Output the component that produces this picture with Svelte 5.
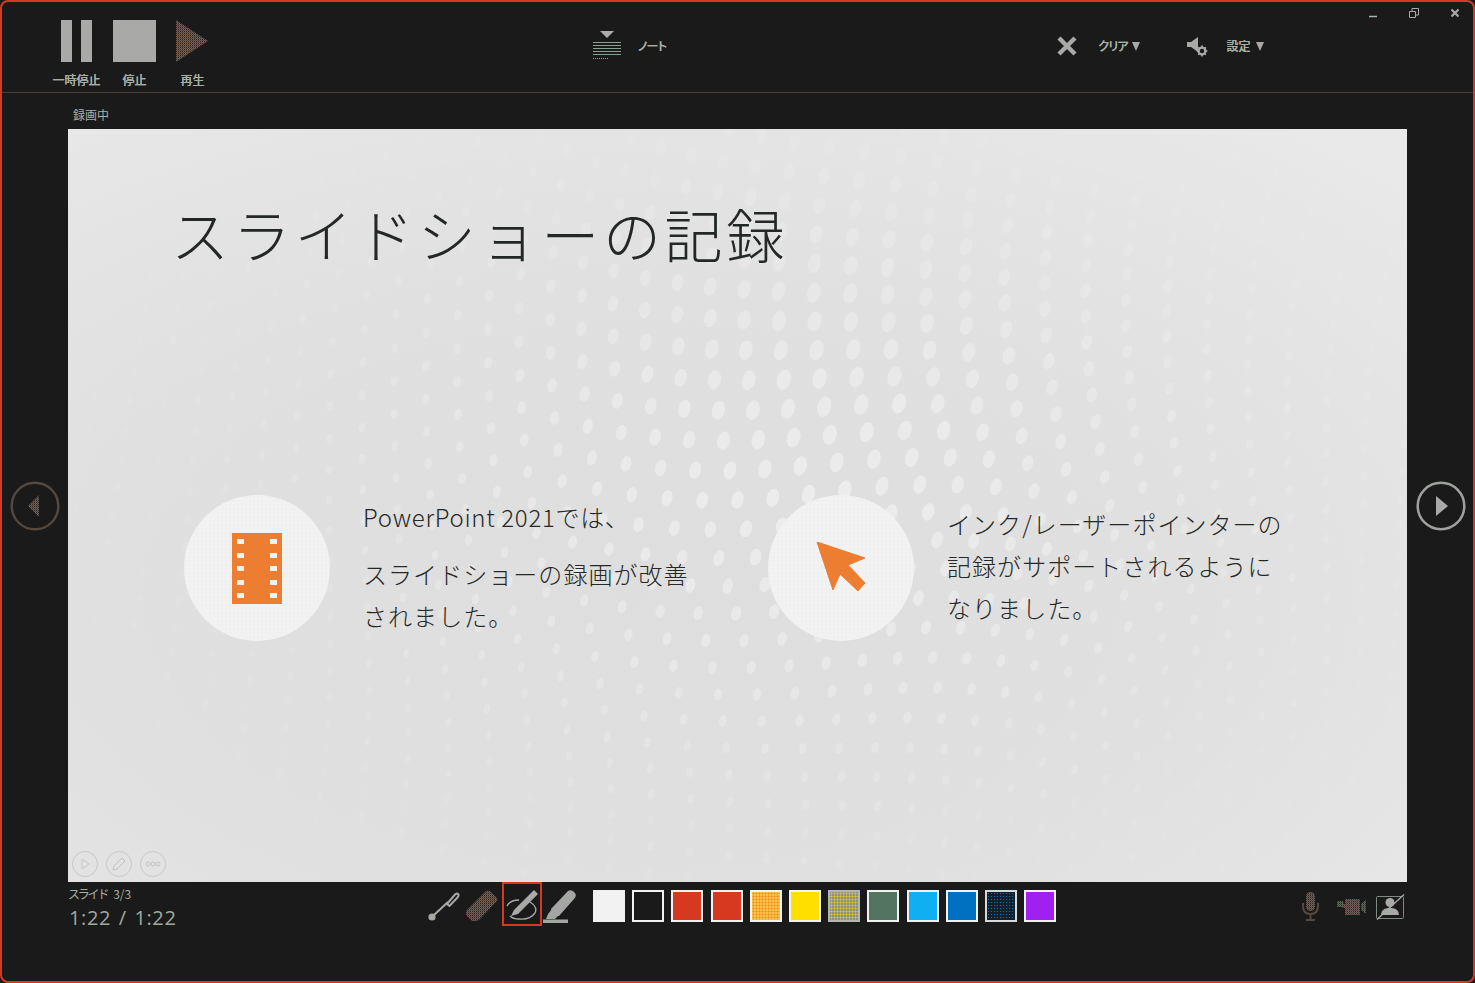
<script lang="ts">
  // Swatches of the ink palette, in toolbar order.
  const swatches = ['white', 'black', 'red', 'red', 'orange', 'yellow', 'olive', 'green', 'sky', 'blue', 'navy', 'purple'];

  // Warped dot lattice behind the slide content (coordinates are slide-local).
  function buildDots() {
    const out: { x: number; y: number; rx: number; ry: number; o: number; t: number }[] = [];
    const cx = 760;
    const cy = 420;
    for (let i = -34; i <= 34; i++) {
      for (let j = -30; j <= 30; j++) {
        const bx = i * 36 + j * 11;
        const by = i * -6 + j * 27;
        const d0 = Math.hypot(bx, by);
        const swirl = 0.00075 * d0;
        const x = cx + bx * Math.cos(swirl) - by * Math.sin(swirl);
        const y = cy + bx * Math.sin(swirl) + by * Math.cos(swirl);
        if (x < 0 || x > 1339 || y < 0 || y > 753) continue;
        const ex = (x - 740) / 500;
        const ey = (y - 370) / 300;
        const env = Math.exp(-(ex * ex + ey * ey));
        if (env < 0.1) continue;
        const size = 0.4 + 0.6 * Math.exp(-Math.pow(Math.hypot(x - 770, y - 240) / 320, 2));
        out.push({ x, y, rx: 7 * size, ry: 10.500 * size, o: 0.68 * env, t: 8 + x * 0.01 });
      }
    }
    return out;
  }
  const dots = buildDots();
</script>

<svg class="defs" width="0" height="0" aria-hidden="true">
  <defs>
    <pattern id="dim" width="2" height="2" patternUnits="userSpaceOnUse">
      <rect width="2" height="2" fill="#2a2826" />
      <rect width="1" height="1" fill="#6d5a50" />
      <rect x="1" y="1" width="1" height="1" fill="#547463" />
      <rect x="1" width="1" height="1" fill="#54473f" />
    </pattern>
  </defs>
</svg>

<div class="window">
  <header class="ribbon">
    <div class="transport">
      <div class="tool">
        <svg width="32" height="42" viewBox="0 0 32 42"><rect x="0" width="11" height="42" fill="#a9aaa7" /><rect x="20" width="11" height="42" fill="#a9aaa7" /></svg>
        <span>一時停止</span>
      </div>
      <div class="tool">
        <svg width="44" height="42" viewBox="0 0 44 42"><rect width="43" height="42" fill="#a9aaa7" /></svg>
        <span>停止</span>
      </div>
      <div class="tool">
        <svg width="34" height="42" viewBox="0 0 34 42"><path d="M0 0 32 21 0 42Z" fill="url(#dim)" /></svg>
        <span>再生</span>
      </div>
    </div>

    <div class="inline">
      <svg width="28" height="30" viewBox="0 0 28 30" class="notes-icon">
        <path d="M7 0H21L14 7Z" fill="#a9aea8" />
        <g stroke="#8d9f92" stroke-width="1">
          <path d="M0 11.500H28M0 14.500H28M0 17.500H28M0 20.500H28M0 23.500H28" />
          <path d="M0 27.500H16" stroke-dasharray="1 1" />
        </g>
      </svg>
      <span class="txt notes-label">ノート</span>
    </div>

    <div class="inline">
      <svg width="20" height="20" viewBox="0 0 20 20" class="clear-icon"><path d="M2 2 18 18M18 2 2 18" stroke="#a9aaa7" stroke-width="4.400" /></svg>
      <span class="txt clear-label">クリア</span>
      <i class="caret"></i>
      <svg width="21" height="20" viewBox="0 0 21 20" class="sound-icon">
        <path d="M0 5H4L11 0V15L4 10H0Z" fill="#a9aaa7" />
        <circle cx="15" cy="14" r="3.400" fill="none" stroke="#a9aaa7" stroke-width="2.400" />
        <path d="M15 8.600V10M15 18V19.400M9.600 14H11M19 14H20.400M11.200 10.200 12.200 11.200M17.800 16.800 18.800 17.800M18.800 10.200 17.800 11.200M12.200 16.800 11.200 17.800" stroke="#a9aaa7" stroke-width="1.600" />
      </svg>
      <span class="txt settings-label">設定</span>
      <i class="caret"></i>
    </div>

    <div class="win-controls">
      <svg width="10" height="10" viewBox="0 0 10 10"><path d="M1 8.500H9" stroke="#a5b5a8" stroke-width="1.600" /></svg>
      <svg width="10" height="10" viewBox="0 0 10 10"><path d="M.5 3.500H6.500V9.500H.5ZM3 3.500V.5H9.500V7H6.500" fill="none" stroke="#a9aaa7" /></svg>
      <svg width="10" height="10" viewBox="0 0 10 10"><path d="M1.500 1.500 8.500 8.500M8.500 1.500 1.500 8.500" stroke="#a9aaa7" stroke-width="2.200" /></svg>
    </div>
  </header>

  <div class="stage">
    <div class="rec-label">録画中</div>

    <div class="side">
      <svg width="50" height="50" viewBox="0 0 50 50">
        <circle cx="25" cy="25" r="23.300" fill="none" stroke="#54483f" stroke-width="2.400" />
        <path d="M18 25 29 14V36Z" fill="url(#dim)" />
      </svg>
    </div>

    <main class="slide">
      <svg class="dots" width="1339" height="753" viewBox="0 0 1339 753" aria-hidden="true">
        {#each dots as d}
          <ellipse cx={d.x} cy={d.y} rx={d.rx} ry={d.ry} fill="#f1f1f1" opacity={d.o} transform="rotate({d.t} {d.x} {d.y})" />
        {/each}
      </svg>

      <h1>スライドショーの記録</h1>

      <div class="features">
        <section class="feature">
          <div class="disc">
            <svg width="50" height="71" viewBox="0 0 50 71">
              <rect width="50" height="71" fill="#ed7d31" />
              {#each [8, 22, 35, 49, 62] as y}
                <rect x="5" y={y - 2} width="7" height="5" fill="#f2f2f2" />
                <rect x="38" y={y - 2} width="7" height="5" fill="#f2f2f2" />
              {/each}
            </svg>
          </div>
          <div class="copy left">
            <p class="first">PowerPoint 2021では、</p>
            <p>スライドショーの録画が改善</p>
            <p>されました。</p>
          </div>
        </section>

        <section class="feature">
          <div class="disc">
            <svg width="50" height="50" viewBox="0 0 50 50" class="cursor">
              <path d="M1 0 49 16 32 23 49 41 42 49 24 32 17 48Z" fill="#ed7d31" stroke="#ed7d31" stroke-linejoin="round" />
            </svg>
          </div>
          <div class="copy">
            <p>インク/レーザーポインターの</p>
            <p>記録がサポートされるように</p>
            <p>なりました。</p>
          </div>
        </section>
      </div>

      <div class="slide-controls">
        <span class="mini"><svg width="14" height="14" viewBox="0 0 14 14"><path d="M4 2 11 7 4 12Z" fill="none" stroke="#c6c6c6" /></svg></span>
        <span class="mini"><svg width="16" height="16" viewBox="0 0 16 16"><path d="M2 14 3 10 11 2 14 5 6 13Z" fill="none" stroke="#c2c2c2" /></svg></span>
        <span class="mini"><svg width="16" height="6" viewBox="0 0 16 6"><g fill="none" stroke="#c2c2c2"><circle cx="3" cy="3" r="2" /><circle cx="8" cy="3" r="2" /><circle cx="13" cy="3" r="2" /></g></svg></span>
      </div>
    </main>

    <div class="side next">
      <svg width="50" height="50" viewBox="0 0 50 50">
        <circle cx="25" cy="25" r="23.300" fill="none" stroke="#9ea29c" stroke-width="2.500" />
        <path d="M20 15 32 25 20 35Z" fill="#a9aaa7" />
      </svg>
    </div>
  </div>

  <footer class="footer">
    <div class="meta">
      <div class="slide-no"><span class="kana">スライド</span>3/3</div>
      <div class="time">1:22 / 1:22</div>
    </div>

    <div class="pens">
      <span class="pen laser">
        <svg width="32" height="32" viewBox="0 0 32 32">
          <circle cx="4" cy="27" r="3.600" fill="#a3a8a3" />
          <path d="M6 25 20 12" stroke="#a9aaa7" stroke-width="2" />
          <path d="M19 14 27 4.500Q29.500 2.500 30.500 4.500 31 6 29 8L21.500 16Z" fill="none" stroke="#a9aaa7" stroke-width="2" />
        </svg>
      </span>
      <span class="pen eraser">
        <svg width="32" height="32" viewBox="0 0 32 32">
          <path d="M0 21 20 1Q22 0 24 1L31 8Q32 10 31 11L13 30Q11 31 9 31H6L0 25Z" fill="url(#dim)" />
        </svg>
      </span>
      <span class="pen active">
        <svg width="34" height="34" viewBox="0 0 34 34">
          <path d="M2 17Q5 11 14 11M25 13Q33 18 30 24 25 31 14 30 8 30 5 27" fill="none" stroke="#a9aaa7" stroke-width="1.300" />
          <path d="M6 27 9 21 29 1 33 5 13 25Z" fill="#a9aaa7" />
        </svg>
      </span>
      <span class="pen marker">
        <svg width="34" height="34" viewBox="0 0 34 34">
          <path d="M8 19 25 1Q29-1 32 3 34 6 31 9L16 26 10 26Z" fill="#a3a6a2" />
          <path d="M5 24 9 19 15 26 12 29H3Z" fill="#a3a6a2" />
          <rect x="0" y="29.500" width="25" height="3.500" fill="#a3a8a3" />
        </svg>
      </span>
    </div>

    <div class="swatches">
      {#each swatches as s}
        <span class="swatch {s}"></span>
      {/each}
    </div>

    <div class="media">
      <svg width="17" height="29" viewBox="0 0 17 29">
        <rect x="4" width="9" height="19" rx="4.500" fill="url(#dim)" />
        <path d="M1 11V14Q1 22 8.500 22 16 22 16 14V11M8.500 22V27M4 28H13" fill="none" stroke="#54483f" stroke-width="2" />
      </svg>
      <svg width="30" height="18" viewBox="0 0 30 18">
        <path d="M0 3H6L7 6H8V1H23V17H8V10H6L5 9H0ZM24 6 29 2V16L24 12Z" fill="url(#dim)" />
      </svg>
      <svg class="person" width="29" height="26" viewBox="0 0 29 26">
        <rect x=".5" y="2.500" width="27" height="22" rx="1" fill="none" stroke="#7f8a80" />
        <circle cx="14" cy="8.500" r="4.500" fill="#a9aaa7" />
        <path d="M5 21Q5 15 12 14H16Q23 15 23 21Z" fill="#a9aaa7" />
        <path d="M1 25.500 28 .5" stroke="#a9aaa7" stroke-width="1.300" />
      </svg>
    </div>
  </footer>
</div>

<style>
  :global(body) {
    margin: 0;
    background: #1a1a1a;
  }

  .defs {
    position: absolute;
  }

  .window {
    position: relative;
    box-sizing: border-box;
    height: 983px;
    display: flex;
    flex-direction: column;
    border: 2px solid #d5391f;
    border-radius: 8px;
    background: #1a1a1a;
    color: #a7aea6;
    font-family: "Noto Sans CJK JP", "Noto Sans", sans-serif;
    overflow: hidden;
  }

  .ribbon {
    box-sizing: border-box;
    height: 91px;
    flex: none;
    display: grid;
    grid-template-columns: 591px 464px 1fr;
    border-bottom: 1px solid #4c3d36;
  }

  .transport {
    display: flex;
    padding: 18px 0 0 45.500px;
  }
  .tool {
    width: 58px;
    display: flex;
    flex-direction: column;
    align-items: center;
    gap: 9px;
    font-size: 12px;
    line-height: 17px;
    font-weight: 500;
    white-space: nowrap;
    text-shadow: 0 0 0.6px #a7aea6;
  }
  .tool svg {
    display: block;
  }

  .inline {
    height: 88px;
    display: flex;
    align-items: center;
  }
  .inline svg {
    flex: none;
  }
  .txt {
    font-size: 12px;
    line-height: 16px;
    font-weight: 500;
    white-space: nowrap;
    text-shadow: 0 0 0.5px #a7aea6;
  }
  .notes-label {
    margin-left: 16px;
    letter-spacing: -2.500px;
  }
  .clear-label {
    margin-left: 21px;
    letter-spacing: -2.500px;
  }
  .settings-label {
    margin-left: 19px;
  }
  .caret {
    margin-left: 5px;
    width: 0;
    height: 0;
    border-left: 4.500px solid transparent;
    border-right: 4.500px solid transparent;
    border-top: 9px solid #a9aaa7;
  }
  .sound-icon {
    margin-left: 47px;
    margin-top: 2px;
  }

  .win-controls {
    position: absolute;
    top: 6px;
    right: 13px;
    display: flex;
    gap: 31px;
  }

  .stage {
    flex: none;
    display: grid;
    grid-template-columns: 66px 1339px 1fr;
    grid-template-rows: 36px 753px;
  }
  .rec-label {
    grid-column: 2;
    grid-row: 1;
    align-self: end;
    padding: 0 0 6px 5px;
    font-size: 12px;
    line-height: 17px;
    color: #a9b0a8;
  }
  .side {
    grid-row: 2;
    display: flex;
    align-items: center;
    justify-content: center;
  }
  .side.next {
    padding-left: 2px;
  }

  .slide {
    position: relative;
    grid-column: 2;
    grid-row: 2;
    overflow: hidden;
    background: radial-gradient(ellipse 80% 80% at 42% 62%, #dedede 0%, #e0e0e0 50%, #e4e4e4 78%, #e9e9e9 100%);
    color: #262826;
  }
  .dots {
    position: absolute;
    inset: 0;
  }

  h1 {
    position: relative;
    margin: 0;
    padding: 63px 0 0 103px;
    height: 83px;
    font-size: 58px;
    line-height: 83px;
    font-weight: 300;
    letter-spacing: 3.700px;
    white-space: nowrap;
    color: #232825;
  }

  .features {
    position: relative;
    margin-top: 220px;
    padding-left: 116px;
    display: flex;
  }
  .feature {
    width: 584px;
    display: flex;
    align-items: center;
    gap: 33px;
  }
  .disc {
    width: 146px;
    height: 146px;
    flex: none;
    display: flex;
    align-items: center;
    justify-content: center;
    border-radius: 50%;
    background-color: #f2f2f2;
    background-image: radial-gradient(#ebebeb 0.6px, transparent 0.8px);
    background-size: 4px 4px;
  }
  .cursor {
    margin-top: -2px;
  }

  .copy {
    margin-top: -4px;
    font-size: 24px;
    line-height: 42px;
    font-weight: 300;
    letter-spacing: 1.050px;
    white-space: nowrap;
  }
  .copy p {
    margin: 0;
  }
  .copy.left .first {
    margin-bottom: 15px;
    letter-spacing: 0.700px;
  }

  .slide-controls {
    position: absolute;
    left: 4px;
    bottom: 5px;
    display: flex;
    gap: 8px;
  }
  .mini {
    box-sizing: border-box;
    width: 26px;
    height: 26px;
    display: flex;
    align-items: center;
    justify-content: center;
    border: 1px solid #c8c8c8;
    border-radius: 50%;
  }

  .footer {
    flex: 1;
    display: flex;
    align-items: flex-start;
    padding-left: 66px;
  }
  .meta {
    width: 358px;
    flex: none;
    padding-top: 3px;
  }
  .slide-no {
    font-size: 12px;
    line-height: 17px;
    color: #a7aea6;
  }
  .kana {
    margin-right: 6px;
    letter-spacing: -2.200px;
  }
  .time {
    margin-top: 4px;
    padding-left: 1px;
    font-family: "Open Sans", "Noto Sans", sans-serif;
    font-size: 20px;
    line-height: 24px;
    font-weight: 400;
    letter-spacing: 0.600px;
    word-spacing: 2px;
    color: #a0a89e;
  }

  .pens {
    display: flex;
    align-items: flex-start;
    width: 167px;
    flex: none;
  }
  .pen {
    display: flex;
    justify-content: center;
  }
  .pen.laser {
    width: 32px;
    padding: 8px 0 0 2px;
  }
  .pen.eraser {
    width: 32px;
    padding: 8px 0 0 6px;
  }
  .pen.active {
    box-sizing: border-box;
    width: 40px;
    height: 44px;
    margin-left: 4px;
    padding-top: 5px;
    border: 2px solid #d5391f;
  }
  .pen.marker {
    width: 34px;
    padding: 8px 0 0 1px;
  }

  .swatches {
    display: flex;
    gap: 7.200px;
    padding-top: 8px;
  }
  .swatch {
    box-sizing: border-box;
    width: 32px;
    height: 32px;
    border: 2px solid #f2f2f2;
  }
  .white { background: #f2f2f2; }
  .black { background: #1a1a1a; }
  .red { background: #d6391f; }
  .orange {
    background: radial-gradient(#f08c1e 0.9px, transparent 1.1px) 0 0 / 3px 3px, #fbc24a;
  }
  .yellow { background: #ffdf00; }
  .olive {
    border-color: #b4b6b0;
    background: radial-gradient(#e6cc10 0.9px, transparent 1.1px) 0 0 / 3px 3px, #8c9188;
  }
  .green { background: #53745f; }
  .sky { background: #0fb0f2; }
  .blue { background: #0070c0; }
  .navy {
    border-color: #d8d8d8;
    background: radial-gradient(#0e72bb 0.8px, transparent 1px) 0 0 / 3px 3px, #13202c;
  }
  .purple { background: #a020f0; }

  .media {
    margin-left: auto;
    padding: 10px 68px 0 0;
    display: flex;
    align-items: center;
    gap: 18px;
  }
  .media svg {
    flex: none;
  }
  .person {
    margin-left: -9px;
  }
</style>
